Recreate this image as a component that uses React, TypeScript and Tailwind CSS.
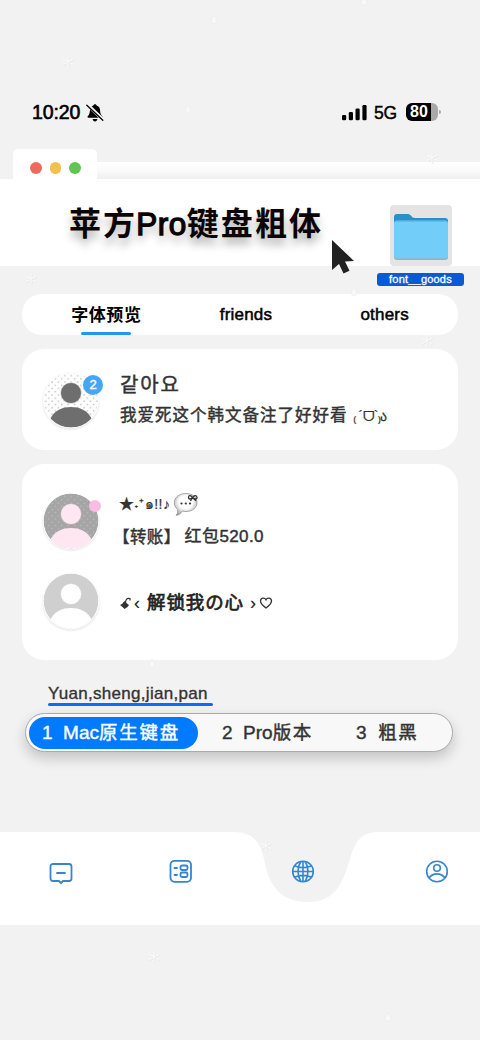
import type { ReactNode } from "react";

const TABS = [
  { label: "字体预览", active: true },
  { label: "friends", active: false },
  { label: "others", active: false },
];

function Snowflake({ className }: { className: string }) {
  return (
    <svg viewBox="0 0 12 12" className={`absolute size-3 ${className}`} fill="none" strokeWidth="1.1" strokeLinecap="round">
      <path d="M6.8 1.5v10M2.3 4.2l9 5M2.3 9.2l9-5" stroke="#e6e6e6" />
      <path d="M6 1v10M1.5 3.5l9 5M1.5 8.5l9-5" stroke="#fafafa" />
    </svg>
  );
}

function Drop({ className }: { className: string }) {
  return (
    <svg viewBox="0 0 8 10" className={`absolute h-2.5 w-2 ${className}`}>
      <path d="M4 1C5 3 7 4.5 7 6.5a3 3 0 0 1-6 0C1 4.5 3 3 4 1Z" fill="#f8f8f8" stroke="#e9e9e9" strokeWidth="0.7" />
    </svg>
  );
}

function StatusBar() {
  return (
    <div className="flex h-[149px] items-start pt-[101px] pl-8 font-['Liberation_Sans',sans-serif] text-black">
      <span className="w-[49px] text-[19.5px] leading-[22px] tracking-[-0.1px] [-webkit-text-stroke:0.6px]">10:20</span>
      <svg viewBox="0 0 20 20" className="mt-0.5 ml-1 size-5">
        <path d="M10 1.2c.9 0 1.5.6 1.6 1.3C14 3.2 15 5 15.100 7.500c.1 3.500 1.200 4.500 2.300 6 .3.600 0 1.200-.7 1.200H3.300c-.7 0-1-.6-.7-1.200 1.100-1.500 2.200-2.500 2.300-6C5 5 6 3.200 8.400 2.500c.1-.7.700-1.300 1.600-1.300ZM7.600 16h4.800c-.2 1.400-1.200 2.400-2.400 2.400S7.800 17.400 7.600 16Z" fill="#000" />
        <path d="M2.300 1.500l16.500 16" stroke="#f2f2f2" strokeWidth="3.4" />
        <path d="M1.800 2.300l16 15" stroke="#000" strokeWidth="1.3" strokeLinecap="round" />
      </svg>
      <svg viewBox="0 0 26 17" className="mt-[3px] ml-[236px] h-[17px] w-[26px]">
        <rect x="1" y="11" width="4.2" height="5.2" rx="1.3" />
        <rect x="7.8" y="8" width="4.2" height="8.2" rx="1.3" />
        <rect x="14.500" y="4.5" width="4.2" height="11.7" rx="1.3" />
        <rect x="21.4" y="1" width="4.2" height="15.2" rx="1.3" />
      </svg>
      <span className="ml-[7px] w-[24px] text-[17.5px] leading-6 tracking-[-0.2px] [-webkit-text-stroke:0.4px]">5G</span>
      <div className="mt-0.5 ml-[8px] flex h-[18px] w-8 items-center overflow-hidden rounded-[6px] bg-[linear-gradient(90deg,#000_25px,#a9a9a9_25px)]">
        <span className="w-[26px] text-center text-[16px] leading-[18px] font-bold text-white">80</span>
      </div>
      <div className="mt-[9px] ml-px h-1 w-[2px] rounded-r-full bg-[#a9a9a9]" />
    </div>
  );
}

function WindowHeader() {
  return (
    <header>
      <div className="flex h-[30px] items-end">
        <div className="ml-[13px] flex h-[30px] w-[84px] items-center gap-2 rounded-t-[5px] bg-white pt-2 pl-[17px]">
          <i className="size-[11.5px] rounded-full bg-[#ed6a5e]" />
          <i className="size-[11.5px] rounded-full bg-[#f5bf4f]" />
          <i className="size-[11.5px] rounded-full bg-[#61c554]" />
        </div>
        <div className="h-[17px] flex-1 bg-linear-to-b from-white via-[#fafafa] to-[#efefef]" />
      </div>
      <div className="relative flex h-[87px] bg-white">
        <h1 className="ml-[69px] pt-[19px] font-['Noto_Sans_CJK_SC',sans-serif] text-[32px] leading-[46px] font-bold tracking-[2.1px] whitespace-nowrap text-[#0c0404] [text-shadow:0_7px_8px_rgba(0,0,0,0.3)]">
          苹方<span className="-ml-px font-['Liberation_Sans'] text-[31.5px] font-normal tracking-[0.5px] [-webkit-text-stroke:1.3px]">Pro</span>键盘粗体
        </h1>
        <svg viewBox="0 0 24 36" className="absolute top-[60px] left-[331px] h-9 w-6">
          <path d="M1 1v30l7-6 4.500 9.500 6-2.800-4.500-9.200 9-.6Z" fill="#222" />
        </svg>
        <div className="absolute top-[26px] left-[377px] flex w-[87px] flex-col items-center">
          <div className="flex h-[61px] w-[62px] items-center justify-center rounded-[4px] bg-[#e4e4e4]">
            <svg viewBox="0 0 56 48" className="mt-0.5 h-12 w-14">
              <rect x="1" y="9" width="54" height="38" rx="3" fill="#a3adb2" />
              <path d="M1 4a3 3 0 0 1 3-3h11c3 0 3.500 4 7 4h30a3 3 0 0 1 3 3v12H1Z" fill="#2a91c4" />
              <rect x="1" y="7.500" width="54" height="38" rx="3" fill="#72cdf9" />
              <path d="M2 8.500h52" stroke="#61bce8" />
            </svg>
          </div>
          <div className="mt-[7px] h-[13px] w-[87px] rounded-[3px] bg-[#0a5bd3] text-center font-['Liberation_Sans'] text-[11px] leading-[13px] tracking-[0.2px] text-white [-webkit-text-stroke:0.3px]">
            font__goods
          </div>
        </div>
      </div>
    </header>
  );
}

function Person({ bg, fg, dots, id }: { bg: string; fg: string; dots?: string; id: string }) {
  return (
    <svg viewBox="0 0 60 60" className="size-[60px] drop-shadow-[0_1px_1px_rgba(0,0,0,0.12)]">
      <defs>
        <pattern id={`${id}-dots`} width="6.4" height="6.4" patternUnits="userSpaceOnUse">
          <circle cx="1.500" cy="1.500" r=".75" fill={dots ?? "none"} />
          <circle cx="4.700" cy="4.700" r=".75" fill={dots ?? "none"} />
        </pattern>
        <clipPath id={`${id}-clip`}>
          <circle cx="30" cy="29" r="27.5" />
        </clipPath>
      </defs>
      <circle cx="30" cy="29.5" r="28" fill="#fff" />
      <g clipPath={`url(#${id}-clip)`}>
        <circle cx="30" cy="29" r="27.5" fill={bg} />
        <circle cx="30" cy="29" r="27.5" fill={`url(#${id}-dots)`} />
        <circle cx="30" cy="22" r="10.5" fill={fg} stroke={bg} strokeWidth=".6" />
        <path d="M9 48C14 39 21 36 30 36s16 3 21 12c-5 6-12 8.500-21 8.500S14 54 9 48Z" fill={fg} />
      </g>
    </svg>
  );
}

function ChatBubble() {
  return (
    <svg viewBox="0 0 26 25" className="h-[25px] w-[26px]">
      <defs>
        <radialGradient id="bubble" cx=".5" cy=".4" r=".6">
          <stop offset=".5" stopColor="#fff" />
          <stop offset="1" stopColor="#aaa" />
        </radialGradient>
      </defs>
      <path d="M13 1.500c6.500 0 11 3.800 11 9s-4.500 9-11 9c-1.500 0-2.600-.2-3.700-.5C8 21.500 5.500 23.500 3 23.300c1.500-1.500 2-3.500 1.700-5.800C2.500 16 1.300 13.500 1.300 10.500c0-5.200 5.200-9 11.700-9Z" fill="url(#bubble)" stroke="#888" strokeWidth=".7" />
      <g fill="#333">
        <circle cx="8.500" cy="11.500" r="1.1" />
        <circle cx="12.800" cy="11.500" r="1.1" />
        <circle cx="17" cy="11.500" r="1.1" />
      </g>
      <path d="M19.500 5.500c-2-3-4-2-4 0s2 2 4 0c2-3 4.500-2 4.500 0s-2.500 2-4.500 0l-2 3.500M19.500 5.500L23 8.800" fill="none" stroke="#333" strokeWidth="1.3" />
    </svg>
  );
}

function Row({ avatar, children }: { avatar: ReactNode; children: ReactNode }) {
  return (
    <div className="flex items-center">
      <div className="relative mr-[19px] size-[60px] shrink-0">{avatar}</div>
      <div className="font-['Liberation_Sans','Noto_Sans_CJK_SC','Noto_Sans_CJK_KR',sans-serif] whitespace-nowrap text-[#333] [-webkit-text-stroke:0.45px]">
        {children}
      </div>
    </div>
  );
}

function Tabs() {
  return (
    <div className="mx-[22px] mt-7 flex h-[41px] rounded-[20px] bg-white pr-[5px] pl-[15px] font-['Liberation_Sans','Noto_Sans_CJK_SC',sans-serif] text-black">
      {TABS.map((t) => (
        <div key={t.label} className="flex flex-1 flex-col items-center justify-between pt-[9px]">
          <span className={t.active ? "pt-px text-[17px] leading-6 font-bold tracking-[0.6px]" : "pl-0.5 text-[17px] leading-6 tracking-[0.2px] [-webkit-text-stroke:0.5px]"}>
            {t.label}
          </span>
          {t.active && <i className="h-[3px] w-[50px] rounded-full bg-[#2196f3]" />}
        </div>
      ))}
    </div>
  );
}

function Keyboard() {
  return (
    <section className="mt-[23px] font-['Liberation_Sans','Noto_Sans_CJK_SC',sans-serif] text-[#333]">
      <div className="ml-12 h-[20px] text-[17px] leading-[22px] tracking-[0.3px] whitespace-nowrap [-webkit-text-stroke:0.35px]">
        Yuan,sheng,jian,pan
      </div>
      <div className="ml-12 h-[2.5px] w-[165px] rounded-full bg-[#0a6cff]" />
      <div className="mt-[7.5px] ml-[25px] flex h-[39px] w-[428px] items-center rounded-full border border-[#aaa] bg-[#f8f8f8] px-[3px] text-[19px] shadow-[0_6px_14px_rgba(0,0,0,0.2)] [-webkit-text-stroke:0.4px]">
        <div className="flex h-8 w-[169px] items-center rounded-full bg-[#007aff] pt-px pl-[13px] whitespace-pre text-white">
          1  Mac<span className="text-[18.5px] tracking-[1.7px]">原生键盘</span>
        </div>
        <div className="ml-6 w-[134px] pt-px whitespace-pre">
          2  Pro<span className="text-[18.5px] tracking-[1.5px]">版本</span>
        </div>
        <div className="pt-px whitespace-pre">
          3  <span className="ml-px text-[18.5px] tracking-[1.5px]">粗黑</span>
        </div>
      </div>
    </section>
  );
}

function BottomNav() {
  return (
    <nav className="relative mt-20 h-[93px]">
      <svg viewBox="0 0 480 93" className="h-[93px] w-[480px]">
        <path d="M0 0h234c18 0 26 9 30 27 4 23 14 43 44 43 28 0 35-20 42-43 5-18 12-27 28-27h102v93H0Z" fill="#fff" />
      </svg>
      <div className="absolute inset-0 flex items-start pt-[27px] text-[#3585cf]">
        <svg viewBox="0 0 24 26" className="mt-[2px] ml-[49px] h-[26px] w-6" fill="none" stroke="currentColor" strokeWidth="1.8" strokeLinecap="round" strokeLinejoin="round">
          <path d="M4 3h16a2.500 2.500 0 0 1 2.500 2.500v12A2.500 2.500 0 0 1 20 20h-6l-2 2-2-2H4a2.500 2.500 0 0 1-2.500-2.500v-12A2.500 2.500 0 0 1 4 3ZM8 12h8" />
        </svg>
        <svg viewBox="0 0 24 24" className="ml-[95px] size-6" fill="none" stroke="currentColor" strokeWidth="1.8" strokeLinecap="round">
          <rect x="2.5" y="1.8" width="20.5" height="21" rx="4" />
          <rect x="12.5" y="6.5" width="7" height="4.5" rx="1.5" />
          <rect x="12.5" y="13.5" width="7" height="4.5" rx="1.5" />
          <path d="M6.500 9h2.500M6.500 16h2.500" />
        </svg>
        <svg viewBox="0 0 24 24" className="ml-[99px] size-6" fill="none" stroke="currentColor" strokeWidth="1.6">
          <circle cx="12" cy="12.5" r="10.3" />
          <path d="M12 2v21M2 12.500h20M4 7c5 2 11 2 16 0M4 18c5-2 11-2 16 0" />
          <path d="M10 2.300c-4 6-4 14 0 20.500M14 2.300c4 6 4 14 0 20.500" />
        </svg>
        <svg viewBox="0 0 24 24" className="ml-[110px] size-6" fill="none" stroke="currentColor" strokeWidth="1.6">
          <circle cx="12" cy="12.5" r="10.3" />
          <circle cx="12" cy="9" r="3.3" />
          <path d="M4 19c4-5.500 12-5.500 16 0" />
        </svg>
      </div>
    </nav>
  );
}

export default function App() {
  return (
    <div className="relative h-[1040px] w-[480px] overflow-hidden bg-[#f2f2f2]">
      <Snowflake className="top-14 left-[62px]" />
      <Snowflake className="top-[152px] left-[426px]" />
      <Snowflake className="top-[273px] left-[25px]" />
      <Snowflake className="top-[335px] left-[421px]" />
      <Snowflake className="top-[840px] left-[260px]" />
      <Snowflake className="top-[951px] left-[148px]" />
      <Drop className="top-3.5 left-[210px]" />
      <Drop className="-top-1 left-[360px]" />
      <Drop className="top-[104px] left-[184px]" />
      <Drop className="top-[286px] left-[350px]" />
      <Drop className="top-[658px] left-[148px]" />
      <Drop className="top-[1012px] left-[384px]" />

      <StatusBar />
      <WindowHeader />
      <Tabs />

      {/* Pinned chat */}
      <section className="mx-[22px] mt-[14px] h-[101px] rounded-[22px] bg-white pt-[21px] pl-[19px]">
        <Row
          avatar={
            <>
              <Person id="a" bg="#fdfdfd" fg="#6e6e6e" dots="#bbb" />
              <span className="absolute top-[4px] left-[42px] size-5 rounded-full bg-[#47a6f3] text-center font-['Liberation_Sans'] text-[13px] leading-5 text-white [-webkit-text-stroke:0.4px]">2</span>
            </>
          }
        >
          <p className="text-[20px] leading-[30px] tracking-[1.9px]">같아요</p>
          <p className="text-[16.5px] leading-[30px] tracking-[1px]">
            我爱死这个韩文备注了好好看 <span className="text-[14px] tracking-[-0.7px] [-webkit-text-stroke:0.2px]">₍ ´ᗜ`₎ა</span>
          </p>
        </Row>
      </section>

      <section className="mx-[22px] mt-[14px] h-[196px] rounded-[22px] bg-white pt-[25px] pl-[19px]">
        <Row
          avatar={
            <>
              <Person id="b" bg="#a5a5a5" fg="#ffe6f0" dots="#bdbdbd" />
              <i className="absolute top-2 left-12 size-3 rounded-full bg-[#f8bde3]" />
            </>
          }
        >
          <p className="flex h-[31px] items-center text-[15px] [-webkit-text-stroke:0.2px]">
            <span className="-ml-px">★</span>
            <span className="text-[14px] tracking-[0.5px]">˖⁺๑!!♪</span>
            <span className="ml-[3px]"><ChatBubble /></span>
          </p>
          <p className="flex text-[17px] leading-[34px] tracking-[0.4px]">
            <span className="-ml-[7px] text-[16.5px]">【转账】</span>
            <span className="ml-1">红包520.0</span>
          </p>
        </Row>
        <div className="mt-[18px]">
          <Row avatar={<Person id="c" bg="#cfcfcf" fg="#fff" />}>
            <p className="flex items-center pt-0.5 text-[18px] text-[#222]">
              <svg viewBox="0 0 12 14" className="mr-[2px] h-3.5 w-3">
                <path d="M0 9l2-1 2.500-3L7 7.500 9 9 7.500 11 4.500 13 2.500 11Z" fill="#333" />
                <path d="M5.500 7c0-3 1-5 4.500-4.500v2" fill="none" stroke="#333" strokeWidth="1.2" />
              </svg>
              <span className="[-webkit-text-stroke:0.1px]">‹</span>
              <span className="mr-[6px] ml-[7px] text-[18.5px] tracking-[0.9px] [-webkit-text-stroke:0.7px]">解锁我の心</span>
              <span className="[-webkit-text-stroke:0.1px]">›</span>
              <svg viewBox="0 0 14 14" className="ml-[3px] size-3.5">
                <path d="M7 12C3 9 1.500 7 1.500 5c0-3 4-4 5.500-1.200C8.500 1 12.500 2 12.500 5c0 2-1.500 4-5.500 7Z" fill="none" stroke="#333" strokeWidth="1.3" />
              </svg>
            </p>
          </Row>
        </div>
      </section>

      <Keyboard />
      <BottomNav />
    </div>
  );
}
